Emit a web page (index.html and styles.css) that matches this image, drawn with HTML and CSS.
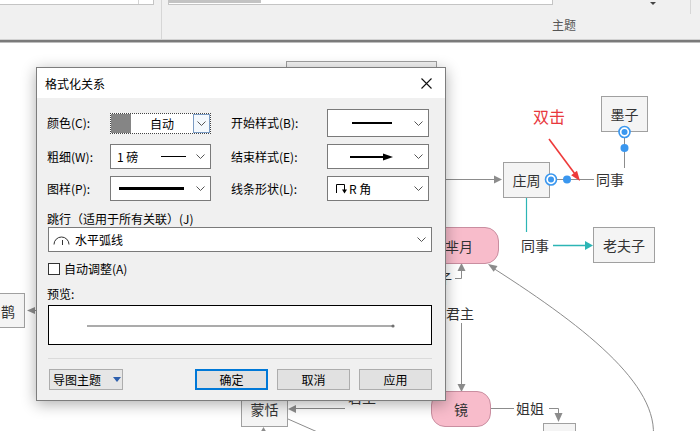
FILE: index.html
```html
<!DOCTYPE html>
<html lang="zh-CN">
<head>
<meta charset="utf-8">
<title>格式化关系</title>
<link rel="stylesheet" href="styles.css">
</head>
<body>
<div class="ribbon">
  <div class="rb-group1"><div class="rb-box1"><div class="rb-box1-cell"></div></div></div>
  <div class="rb-sep"></div>
  <div class="rb-group2">
    <div class="rb-top">
      <div class="rb-box2"><div class="rb-thumb"></div></div>
      <div class="rb-more"><span class="rb-tri"></span></div>
    </div>
    <div class="rb-label">主题</div>
  </div>
  <div class="rb-sep2"></div>
</div>
<div class="rb-rule"></div>

<div class="canvas">
  <div class="stage">
    <svg class="links" width="700" height="431" viewBox="0 0 700 431">
      <g stroke="#8c8c8c" stroke-width="1" fill="none">
        <line x1="440" y1="179.5" x2="495" y2="179.5"/>
        <line x1="551" y1="179.5" x2="594" y2="179.5"/>
        <line x1="624.5" y1="132" x2="624.5" y2="168"/>
        <polyline points="455,278.5 461.5,278.5 461.5,270"/>
        <line x1="461.5" y1="323" x2="461.5" y2="385"/>
        <line x1="490" y1="408.5" x2="514" y2="408.5"/>
        <polyline points="549,408.5 558.5,408.5 558.5,414"/>
        <path d="M493 268 C 590 330, 665 390, 652 445"/>
        <line x1="296" y1="408.5" x2="345" y2="408.5"/>
        <line x1="288" y1="419" x2="322" y2="434"/>
        <line x1="34" y1="310.5" x2="40" y2="310.5"/>
        <polyline points="438,304.5 444,304.5 444,307"/>
      </g>
      <g fill="#8c8c8c">
        <polygon points="494,175.5 502,179.5 494,183.5"/>
        <polygon points="461.5,263 457.5,271 465.5,271"/>
        <polygon points="457.5,384 465.5,384 461.5,392"/>
        <polygon points="554.5,413 562.5,413 558.5,422"/>
        <polygon points="488,264 493.7,271.8 497.5,266"/>
        <polygon points="288,409 296,405 296,413"/>
        <polygon points="263.5,427 259.5,434 267.5,434"/>
        <polygon points="27,310.5 35,307 35,314"/>
      </g>
      <line x1="526.5" y1="197" x2="526.5" y2="232" stroke="#2cb5b5" stroke-width="1.2"/>
      <line x1="553" y1="245.5" x2="587" y2="245.5" stroke="#2cb5b5" stroke-width="1.4"/>
      <polygon points="585,241 593,245.5 585,250" fill="#2cb5b5"/>
    </svg>

    <div class="node hidden-node"></div>
    <div class="node n-mozi">墨子</div>
    <div class="node n-zhuang">庄周</div>
    <div class="node n-laofu">老夫子</div>
    <div class="node pink n-miyue">芈月</div>
    <div class="node pink n-jing">镜</div>
    <div class="node n-meng">蒙恬</div>
    <div class="node n-small"></div>
    <div class="node n-que">鹊</div>

    <span class="tag t-tongshi1">同事</span>
    <span class="tag t-tongshi2">同事</span>
    <span class="tag t-zi">子</span>
    <span class="tag t-junzhu1">君主</span>
    <span class="tag t-jiejie">姐姐</span>
    <span class="tag t-junzhu2">君主</span>
    <span class="hint">双击</span>

    <svg class="overlay" width="700" height="431" viewBox="0 0 700 431">
      <line x1="549" y1="139" x2="575" y2="174" stroke="#ee3a3a" stroke-width="1.6"/>
      <polygon points="580,181 571.2,175.2 577,170.8" fill="#ee3a3a"/>
      <circle cx="551" cy="179.5" r="5.5" fill="#fff" stroke="#3a97ef" stroke-width="1.6"/>
      <circle cx="551" cy="179.5" r="3" fill="#3a97ef"/>
      <circle cx="567" cy="179.5" r="4" fill="#3a97ef"/>
      <circle cx="624.5" cy="132" r="5.5" fill="#fff" stroke="#3a97ef" stroke-width="1.6"/>
      <circle cx="624.5" cy="132" r="3" fill="#3a97ef"/>
      <circle cx="624.5" cy="148" r="4" fill="#3a97ef"/>
    </svg>

    <div class="dialog">
      <div class="dlg-title">
        <span>格式化关系</span>
        <svg class="dlg-close" width="11" height="11" viewBox="0 0 11 11"><path d="M0.5 0.5 L10.5 10.5 M10.5 0.5 L0.5 10.5" stroke="#111" stroke-width="1.1" fill="none"/></svg>
      </div>
      <div class="dlg-body">
        <div class="grid">
          <span class="lbl c1">颜色(C):</span>
          <div class="color-combo c2">
            <span class="swatch"></span>
            <span class="cc-text">自动</span>
            <span class="cc-btn"><svg class="chev" width="9" height="5" viewBox="0 0 9 5"><polyline points="0.5,0.5 4.5,4.5 8.5,0.5" fill="none" stroke="#555"/></svg></span>
          </div>
          <span class="lbl c4">开始样式(B):</span>
          <div class="combo tall c5">
            <span class="cb-content center"><span class="start-line"></span></span>
            <svg class="chev" width="9" height="5" viewBox="0 0 9 5"><polyline points="0.5,0.5 4.5,4.5 8.5,0.5" fill="none" stroke="#555"/></svg>
          </div>

          <span class="lbl c1">粗细(W):</span>
          <div class="combo c2">
            <span class="cb-content"><span class="pt">1 磅</span><span class="thin-line"></span></span>
            <svg class="chev" width="9" height="5" viewBox="0 0 9 5"><polyline points="0.5,0.5 4.5,4.5 8.5,0.5" fill="none" stroke="#555"/></svg>
          </div>
          <span class="lbl c4">结束样式(E):</span>
          <div class="combo c5">
            <span class="cb-content center">
              <svg width="44" height="8" viewBox="0 0 44 8"><line x1="0" y1="4" x2="36" y2="4" stroke="#000" stroke-width="2"/><polygon points="33,0.5 43,4 33,7.5" fill="#000"/></svg>
            </span>
            <svg class="chev" width="9" height="5" viewBox="0 0 9 5"><polyline points="0.5,0.5 4.5,4.5 8.5,0.5" fill="none" stroke="#555"/></svg>
          </div>

          <span class="lbl c1">图样(P):</span>
          <div class="combo c2">
            <span class="cb-content"><span class="thick-line"></span></span>
            <svg class="chev" width="9" height="5" viewBox="0 0 9 5"><polyline points="0.5,0.5 4.5,4.5 8.5,0.5" fill="none" stroke="#555"/></svg>
          </div>
          <span class="lbl c4">线条形状(L):</span>
          <div class="combo c5">
            <span class="cb-content shape">
              <svg width="11" height="10" viewBox="0 0 11 10"><path d="M0.5 9 V0.5 H8.5 V6" fill="none" stroke="#000"/><polygon points="6,5.5 11,5.5 8.5,9.5" fill="#000"/></svg>
              <span class="shape-text">R 角</span>
            </span>
            <svg class="chev" width="9" height="5" viewBox="0 0 9 5"><polyline points="0.5,0.5 4.5,4.5 8.5,0.5" fill="none" stroke="#555"/></svg>
          </div>
        </div>

        <div class="lbl jump-lbl">跳行（适用于所有关联）(J)</div>
        <div class="combo wide">
          <span class="cb-content jump">
            <svg width="17" height="10" viewBox="0 0 17 10"><path d="M1 9.5 A7.5 7.5 0 0 1 16 9.5" fill="none" stroke="#333"/><line x1="9.5" y1="5" x2="9.5" y2="10" stroke="#333"/></svg>
            <span class="jump-text">水平弧线</span>
          </span>
          <svg class="chev" width="9" height="5" viewBox="0 0 9 5"><polyline points="0.5,0.5 4.5,4.5 8.5,0.5" fill="none" stroke="#555"/></svg>
        </div>

        <div class="check-row"><span class="check"></span><span>自动调整(A)</span></div>

        <div class="lbl preview-lbl">预览:</div>
        <div class="preview">
          <svg width="382" height="38" viewBox="0 0 382 38"><line x1="38" y1="20" x2="343" y2="20" stroke="#ababab" stroke-width="2"/><circle cx="344" cy="20" r="1.6" fill="#707070"/></svg>
        </div>

        <div class="dlg-sep"></div>

        <div class="btn-row">
          <button class="btn theme-btn">导图主题<span class="theme-tri"></span></button>
          <div class="btn-group">
            <button class="btn default">确定</button>
            <button class="btn">取消</button>
            <button class="btn">应用</button>
          </div>
        </div>
      </div>
    </div>
  </div>
</div>
</body>
</html>
```

FILE: styles.css
```css
* { box-sizing: border-box; }
html, body { margin: 0; padding: 0; }
body {
  width: 700px;
  height: 431px;
  overflow: hidden;
  background: #fff;
  font-family: "Noto Sans CJK SC", "Noto Sans", sans-serif;
  font-size: 12px;
  color: #000;
}

/* ribbon */
.ribbon {
  height: 40px;
  background: #f0f0f0;
  border-bottom: 1px solid #d2d2d2;
  display: flex;
}
.rb-group1 { width: 154px; }
.rb-box1 {
  height: 5px;
  background: #fff;
  border-right: 1px solid #c4c4c4;
  border-bottom: 1px solid #c4c4c4;
  display: flex;
  justify-content: flex-end;
}
.rb-box1-cell { width: 15px; border-left: 1px solid #d4d4d4; }
.rb-sep { width: 1px; background: #d6d6d6; margin-left: 7px; }
.rb-group2 { margin-left: 6px; width: 522px; display: flex; flex-direction: column; }
.rb-top { display: flex; height: 5px; }
.rb-box2 {
  width: 385px;
  height: 5px;
  background: #fff;
  border: 1px solid #c4c4c4;
  border-top: 0;
}
.rb-thumb { width: 92px; height: 3px; background: #c3c3c3; }
.rb-more { flex: 1; display: flex; }
.rb-tri {
  margin-left: 97px;
  margin-top: 2px;
  width: 0; height: 0;
  border-left: 3px solid transparent;
  border-right: 3px solid transparent;
  border-top: 3px solid #444;
}
.rb-label {
  padding-left: 384px;
  margin-top: 12px;
  line-height: 16px;
  color: #555;
}
.rb-sep2 { width: 1px; height: 14px; background: #d6d6d6; }
.rb-rule { height: 3px; background: #7a7a7a; border-bottom: 1px solid #bdbdbd; }

/* canvas */
.canvas {
  position: relative;
  height: 388px;
  overflow: hidden;
  background: #fff;
}
.stage {
  position: absolute;
  left: 0;
  top: -43px;
  width: 700px;
  height: 431px;
}
.links, .overlay { position: absolute; left: 0; top: 0; }
.overlay { z-index: 3; }

.node {
  position: absolute;
  display: flex;
  align-items: center;
  justify-content: center;
  background: #f4f4f4;
  border: 1px solid #a0a0a0;
  color: #333;
  font-size: 14px;
  z-index: 2;
}
.pink { background: #f8bccb; border-color: #c98ea0; border-radius: 14px; }
.hidden-node { left: 286px; top: 61px; width: 151px; height: 60px; }
.n-mozi { left: 601px; top: 96px; width: 47px; height: 36px; }
.n-zhuang { left: 503px; top: 162px; width: 47px; height: 36px; }
.n-laofu { left: 593px; top: 227px; width: 62px; height: 36px; }
.n-miyue { left: 419px; top: 227px; width: 80px; height: 37px; }
.n-jing { left: 431px; top: 391px; width: 60px; height: 36px; }
.n-meng { left: 241px; top: 391px; width: 47px; height: 36px; }
.n-small { left: 543px; top: 423px; width: 33px; height: 40px; }
.n-que {
  left: -22px; top: 293px; width: 47px; height: 35px;
  justify-content: flex-end;
  padding-right: 9px;
}

.tag {
  position: absolute;
  font-size: 14px;
  line-height: 16px;
  color: #333;
  background: #fff;
  z-index: 2;
}
.t-tongshi1 { left: 596px; top: 171px; }
.t-tongshi2 { left: 521px; top: 237px; }
.t-zi { left: 438px; top: 270px; }
.t-junzhu1 { left: 446px; top: 305px; }
.t-jiejie { left: 516px; top: 400px; }
.t-junzhu2 { left: 348px; top: 389px; }
.hint {
  position: absolute;
  left: 533px;
  top: 106px;
  font-size: 16px;
  line-height: 20px;
  color: #e8383d;
  z-index: 3;
}

/* dialog */
.dialog {
  position: absolute;
  left: 36px;
  top: 67px;
  width: 410px;
  height: 334px;
  border: 1px solid #7d7d7d;
  background: #f0f0f0;
  box-shadow: 0 3px 14px rgba(0, 0, 0, 0.32);
  display: flex;
  flex-direction: column;
  z-index: 10;
}
.dlg-title {
  height: 30px;
  background: #fff;
  display: flex;
  align-items: center;
  justify-content: space-between;
  padding: 0 13px 0 8px;
  font-size: 12px;
}
.dlg-body { flex: 1; padding: 11px 13px 0 11px; }

.grid {
  display: grid;
  grid-template-columns: 62px 101px 21px 95px 102px;
  grid-template-rows: 28px 25px 25px;
  row-gap: 7px;
  align-items: center;
}
.c1 { grid-column: 1; }
.c2 { grid-column: 2; }
.c4 { grid-column: 4; }
.c5 { grid-column: 5; }
.lbl { margin-left: -1px; line-height: 16px; white-space: nowrap; }

.combo {
  height: 25px;
  background: #fff;
  border: 1px solid #7a7a7a;
  display: flex;
  align-items: center;
  padding: 0 5px 0 6px;
}
.combo.tall { height: 28px; }
.cb-content { flex: 1; display: flex; align-items: center; height: 100%; }
.cb-content.center { justify-content: center; padding-right: 4px; }
.chev { flex: none; display: block; }

.color-combo {
  height: 21px;
  border: 1px dotted #444;
  display: flex;
  align-items: stretch;
  background: #fff;
}
.swatch { width: 20px; background: #858585; }
.cc-text { flex: 1; text-align: center; line-height: 19px; }
.cc-btn {
  width: 17px;
  border: 1px solid #7b9cc4;
  background: #f3f8fd;
  display: flex;
  align-items: center;
  justify-content: center;
}

.pt { flex: 1; }
.thin-line { width: 25px; height: 1px; background: #000; margin-right: 10px; }
.thick-line { width: 65px; height: 3px; background: #000; margin-left: 2px; }
.start-line { width: 40px; height: 2px; background: #000; }
.shape { padding-left: 2px; }
.shape-text { margin-left: 2px; }

.jump-lbl { margin-top: 10px; }
.wide { width: 100%; padding-left: 4px; }
.jump-text { margin-left: 5px; }

.check-row {
  margin-top: 10px;
  height: 14px;
  display: flex;
  align-items: center;
  line-height: 14px;
}
.check {
  width: 12px;
  height: 12px;
  border: 1px solid #333;
  background: #fff;
  margin-right: 4px;
}

.preview-lbl { margin-top: 10px; }
.preview {
  margin-top: 3px;
  height: 40px;
  background: #fff;
  border: 1px solid #000;
}
.preview svg { display: block; }

.dlg-sep { margin-top: 13px; height: 1px; background: #dadada; }

.btn-row {
  margin-top: 10px;
  display: flex;
  justify-content: space-between;
  align-items: center;
}
.btn {
  height: 21px;
  width: 73px;
  padding: 0;
  border: 1px solid #adadad;
  background: #e1e1e1;
  font-family: "Noto Sans CJK SC", "Noto Sans", sans-serif;
  font-size: 12px;
  color: #000;
  line-height: 19px;
}
.btn.default { border-color: #0078d7; box-shadow: inset 0 0 0 1px #0078d7; }
.btn-group { display: flex; gap: 9px; }
.theme-btn {
  width: 74px;
  margin-left: 1px;
  display: flex;
  align-items: center;
  padding-left: 3px;
  background: #e6e6e6;
}
.theme-tri {
  margin-left: 12px;
  width: 0; height: 0;
  border-left: 4px solid transparent;
  border-right: 4px solid transparent;
  border-top: 5px solid #2d5fad;
}
```
